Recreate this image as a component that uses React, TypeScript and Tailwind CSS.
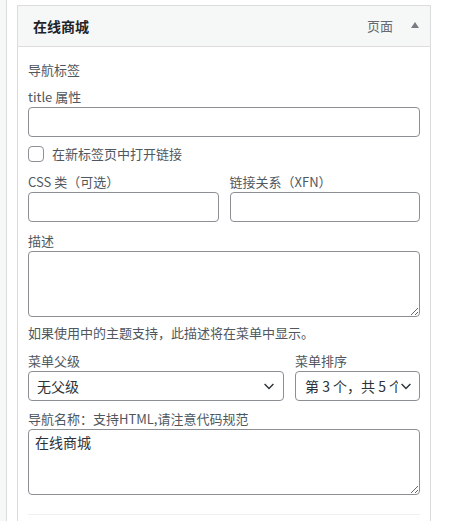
import React from 'react';

const font = { fontFamily: '"Noto Sans CJK SC", "Noto Sans", sans-serif' };

const Label = ({ children }: { children: React.ReactNode }) => (
  <div className="h-[20px] text-[13px] leading-[20px] text-[#50575e]">{children}</div>
);

const Chevron = () => (
  <svg width="16" height="16" viewBox="0 0 20 20" className="shrink-0">
    <path d="M4.5 7.5l5.5 5.5 5.5-5.5" fill="none" stroke="#2c3338" strokeWidth="1.8" />
  </svg>
);

const App = () => {
  return (
    <div className="flex h-[521px] w-[466px] overflow-hidden bg-white" style={font}>
      <div className="w-[7px] shrink-0 border-r border-[#dcdcde] bg-[#f6f7f7]" />
      <div className="ml-[10px] mt-[5px] flex w-[414px] shrink-0 flex-col border-x border-t border-[#dcdcde]">
        <div className="flex h-[41px] items-center border-b border-[#dcdcde] bg-[#f6f7f7] pl-[15px] pr-[11px]">
          <span className="text-[14px] font-semibold text-[#1d2327]">在线商城</span>
          <span className="ml-auto text-[13px] text-[#646970]">页面</span>
          <svg width="8" height="6" viewBox="0 0 8 6" className="ml-[18px] mb-[2px]">
            <path d="M0 6L4 0L8 6Z" fill="#787c82" />
          </svg>
        </div>
        <div className="flex flex-col px-[10px] pt-[13px]">
          <Label>导航标签</Label>
          <div className="mt-[7px]">
            <Label>title 属性</Label>
            <input className="block h-[30px] w-full rounded-[4px] border border-[#8c8f94] bg-white" />
          </div>
          <label className="mt-[7px] flex h-[20px] items-center gap-[8px]">
            <span className="h-[16px] w-[16px] rounded-[4px] border border-[#8c8f94] bg-white" />
            <span className="text-[13px] text-[#50575e]">在新标签页中打开链接</span>
          </label>
          <div className="mt-[8px] flex gap-[11px]">
            <div className="flex-1">
              <Label>CSS 类（可选）</Label>
              <input className="block h-[30px] w-full rounded-[4px] border border-[#8c8f94] bg-white" />
            </div>
            <div className="flex-1">
              <Label>链接关系（XFN）</Label>
              <input className="block h-[30px] w-full rounded-[4px] border border-[#8c8f94] bg-white" />
            </div>
          </div>
          <div className="mt-[9px]">
            <Label>描述</Label>
            <textarea className="block h-[66px] w-full rounded-[4px] border border-[#8c8f94] bg-white" />
          </div>
          <div className="mt-[6px]">
            <Label>如果使用中的主题支持，此描述将在菜单中显示。</Label>
          </div>
          <div className="mt-[8px] flex gap-[11px]">
            <div className="w-[256px]">
              <Label>菜单父级</Label>
              <div className="flex h-[30px] items-center rounded-[4px] border border-[#8c8f94] bg-white pl-[8px] pr-[6px]">
                <span className="flex-1 text-[14px] text-[#2c3338]">无父级</span>
                <Chevron />
              </div>
            </div>
            <div className="w-[125px]">
              <Label>菜单排序</Label>
              <div className="flex h-[30px] items-center rounded-[4px] border border-[#8c8f94] bg-white pl-[9px] pr-[5px]">
                <span className="min-w-0 flex-1 overflow-hidden whitespace-nowrap text-[14px] text-[#2c3338]">
                  第 3 个，共 5 个
                </span>
                <Chevron />
              </div>
            </div>
          </div>
          <div className="mt-[8px]">
            <Label>导航名称：支持HTML,请注意代码规范</Label>
            <textarea
              defaultValue="在线商城"
              className="block h-[66px] w-full rounded-[4px] border border-[#8c8f94] bg-white px-[6px] py-[2px] text-[14px] leading-[20px] text-[#2c3338]"
            />
          </div>
          <div className="mt-[19px] border-t border-[#f0f0f1]" />
        </div>
      </div>
    </div>
  );
};

export default App;
